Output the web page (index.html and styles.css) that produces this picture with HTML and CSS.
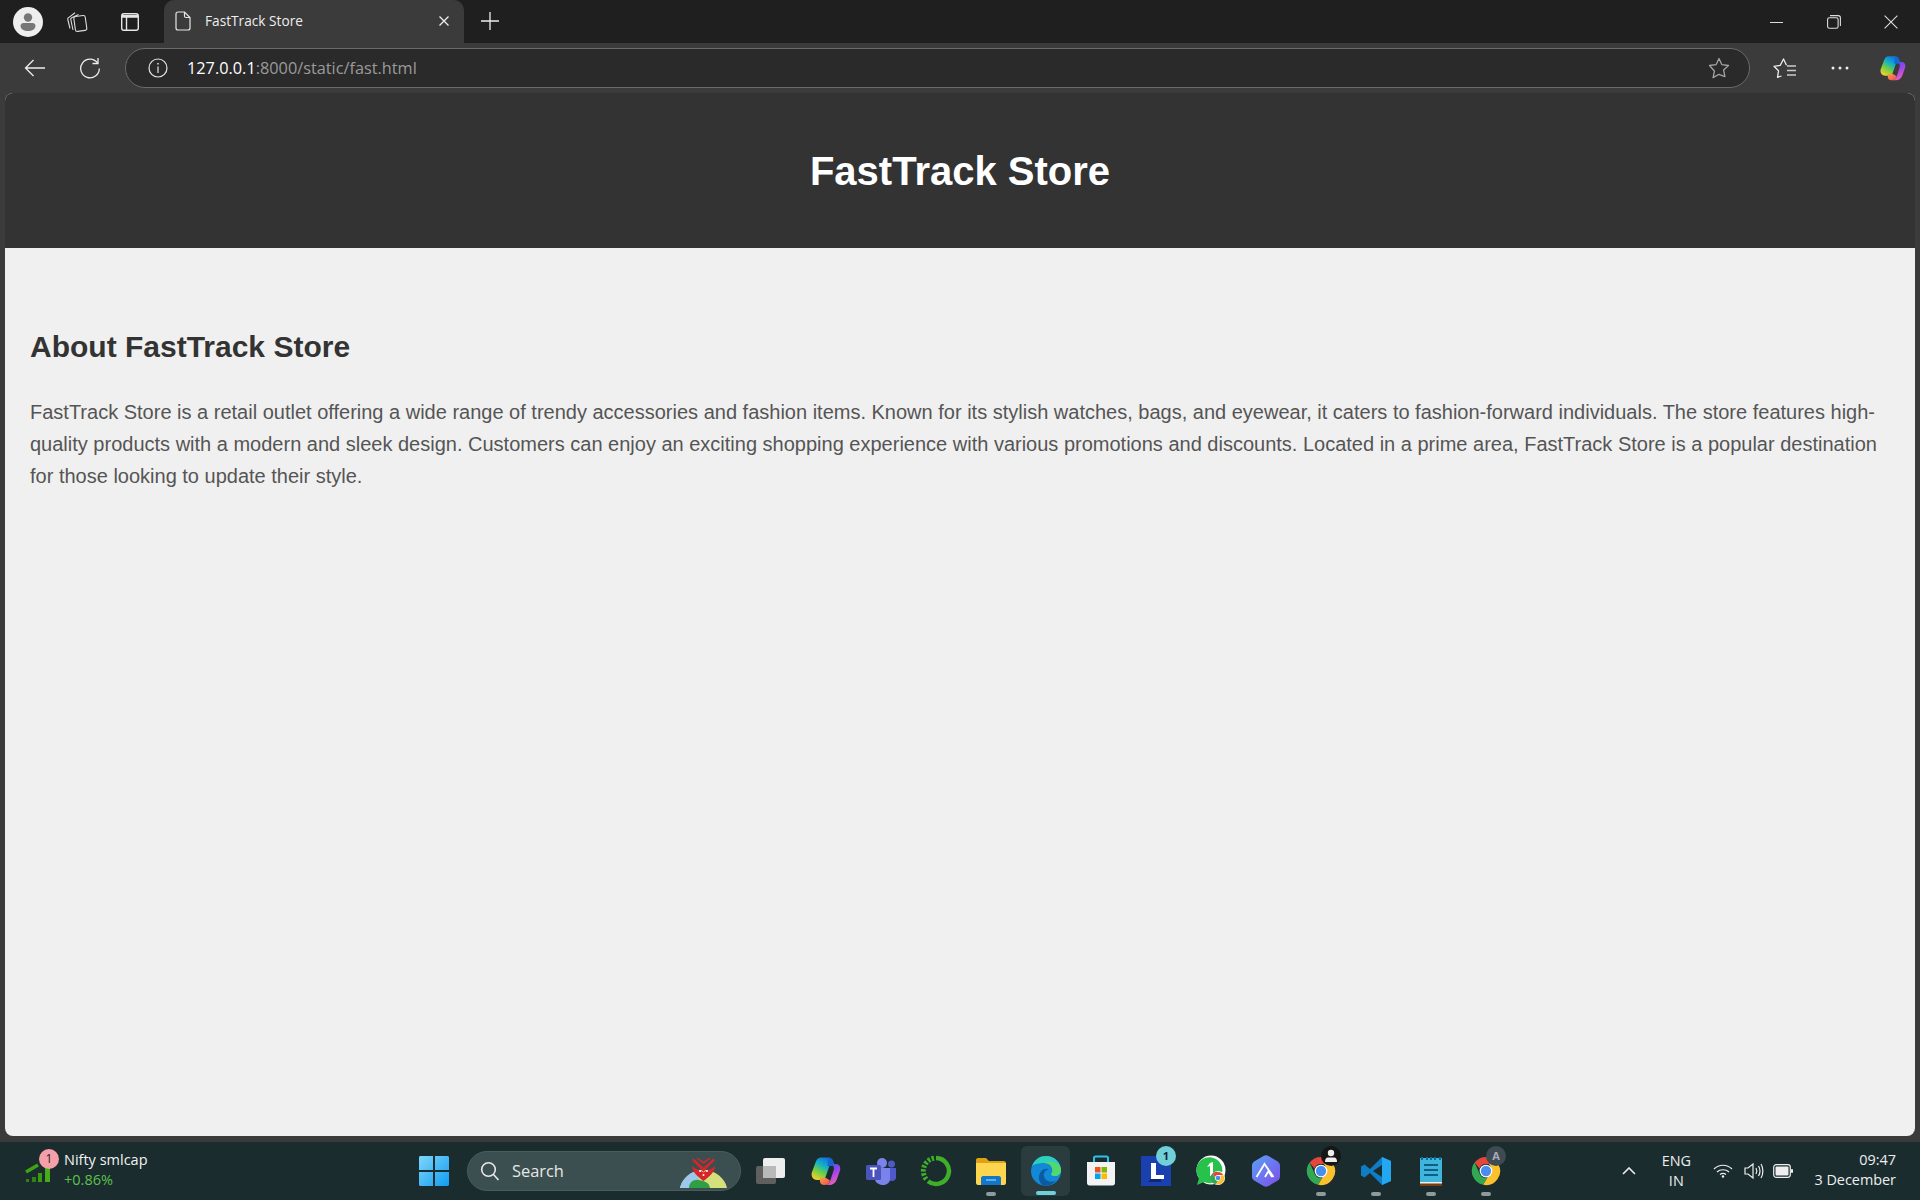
FILE: index.html
```html
<!DOCTYPE html>
<html lang="en">
<head>
<meta charset="utf-8">
<title>FastTrack Store</title>
<link rel="stylesheet" href="styles.css">
</head>
<body>
<svg class="defs" aria-hidden="true">
  <defs>
    <linearGradient id="cpL" x1="0.75" y1="0" x2="0.25" y2="1"><stop offset="0" stop-color="#1570e0"/><stop offset=".35" stop-color="#12b0c8"/><stop offset=".65" stop-color="#6fcf45"/><stop offset="1" stop-color="#f8d02a"/></linearGradient>
    <linearGradient id="cpR" x1="0.3" y1="0" x2="0.7" y2="1"><stop offset="0" stop-color="#4a55e8"/><stop offset=".45" stop-color="#a044ea"/><stop offset="1" stop-color="#f562b0"/></linearGradient>
    <linearGradient id="cpB" x1="0" y1="0" x2="1" y2="1"><stop offset="0" stop-color="#f9a13a"/><stop offset="1" stop-color="#ee4b5e"/></linearGradient>
    <symbol id="copilot" viewBox="0 0 32 30">
      <path d="M11 1.500C8 1.500 6.500 4 5.500 6.500L2 16c-1.500 4 1 8 5 8h7.500L21.500 4c-.5-1.500-1.500-2.500-3.500-2.500z" fill="url(#cpL)"/>
      <path d="M18 1.500c3 0 4.500 1.500 5.200 3.500L25 10h-7.500z" fill="#1667d2"/>
      <path d="M23 8h3c3.500 0 5 3 4 6.500L27 23c-1.500 4-4 6-8 6h-5c4 0 5.500-2 6.500-5L24 13z" fill="url(#cpR)"/>
      <path d="M10 22h6l4 2.500C19.500 27.500 17.500 29 14 29c-2 0-3.500-1-4-3z" fill="url(#cpB)"/>
    </symbol>
    <symbol id="chrome" viewBox="0 0 32 32">
      <path d="M16 1a15 15 0 0 1 13 7.500H16a7.500 7.500 0 0 0-7 4.700L3.800 7A15 15 0 0 1 16 1z" fill="#e5463b"/>
      <path d="M3.800 7L9.700 20a7.500 7.500 0 0 0 7.300 3.400L13 30.700A15 15 0 0 1 3.800 7z" fill="#33a852"/>
      <path d="M29 8.500A15 15 0 0 1 13 30.700l6.300-11a7.500 7.500 0 0 0-.3-11.200z" fill="#fbc02d"/>
      <circle cx="16" cy="16" r="6.800" fill="#fff"/><circle cx="16" cy="16" r="5.500" fill="#4a8df0"/>
    </symbol>
  </defs>
</svg>

<header class="tabbar">
  <div class="avatar">
    <svg viewBox="0 0 30 30" width="30" height="30"><circle cx="15" cy="15" r="15" fill="#eee"/><circle cx="15" cy="10.500" r="4.200" fill="#777"/><path d="M7.500 19c0-2 1.500-3 3-3h9c1.500 0 3 1 3 3 0 3-3.500 5-7.500 5s-7.500-2-7.500-5z" fill="#777"/></svg>
  </div>
  <button class="tool-btn collections">
    <svg viewBox="0 0 22 22" width="22" height="22" fill="none" stroke="#ddd" stroke-width="1.100"><rect x="8.500" y="5" width="11.500" height="15" rx="2" transform="rotate(-8 14 12)"/><path d="M7 19L4.800 8.500c-.2-.9.300-1.500.9-1.800L12.500 3.500"/><path d="M4 17.500L1.800 8.500c-.2-.9.200-1.600.9-1.900L9 1.800"/></svg>
  </button>
  <button class="tool-btn layout">
    <svg viewBox="0 0 20 20" width="20" height="20" fill="none" stroke="#e6e6e6" stroke-width="1.400"><rect x="1.700" y="1.700" width="16.600" height="16.600" rx="2.200"/><path d="M6.500 5v13.300M1.700 5h16.600" /><path d="M2 3h16v2H2z" fill="#e6e6e6" stroke="none"/></svg>
  </button>
  <div class="tab">
    <svg class="tab-doc" viewBox="0 0 16 20" width="16" height="20" fill="none" stroke="#e6e6e6" stroke-width="1.200"><path d="M1 3c0-1.100.9-2 2-2h6.500L15 6.500V17c0 1.100-.9 2-2 2H3c-1.100 0-2-.9-2-2z"/><path d="M9.500 1v4c0 1 .5 1.500 1.500 1.500h4"/></svg>
    <span class="tab-title">FastTrack Store</span>
    <svg class="tab-x" viewBox="0 0 12 12" width="12" height="12" stroke="#eee" stroke-width="1.300"><path d="M1.500 1.500l9 9M10.500 1.500l-9 9"/></svg>
  </div>
  <button class="tool-btn newtab">
    <svg viewBox="0 0 18 18" width="18" height="18" stroke="#eee" stroke-width="1.300"><path d="M9 0v18M0 9h18"/></svg>
  </button>
  <div class="win-controls">
    <svg viewBox="0 0 14 14" width="14" height="14" stroke="#ddd" stroke-width="1"><path d="M0 7.500h13"/></svg>
    <svg viewBox="0 0 14 14" width="14" height="14" fill="none" stroke="#ddd" stroke-width="1.100"><rect x=".6" y="2.800" width="10.500" height="10.500" rx="1.800"/><path d="M3 .6h8.200c1.200 0 2.200 1 2.200 2.200V11"/></svg>
    <svg viewBox="0 0 14 14" width="14" height="14" stroke="#ddd" stroke-width="1.100"><path d="M.6.6l12.800 12.800M13.400.6L.6 13.400"/></svg>
  </div>
</header>

<nav class="toolbar">
  <button class="tool-btn back">
    <svg viewBox="0 0 22 18" width="22" height="18" fill="none" stroke="#eee" stroke-width="1.300"><path d="M21 9H1.500M9.500 1l-8 8 8 8"/></svg>
  </button>
  <button class="tool-btn reload">
    <svg viewBox="0 0 22 22" width="22" height="22" fill="none" stroke="#eee" stroke-width="1.300"><path d="M18.500 6A9.300 9.300 0 1 0 20.300 11.500"/><path d="M19 1v5.500h-5.500"/></svg>
  </button>
  <div class="urlbar">
    <svg class="url-info" viewBox="0 0 20 20" width="20" height="20" fill="none" stroke="#e6e6e6" stroke-width="1.200"><circle cx="10" cy="10" r="9"/><path d="M10 8.500V15"/><path d="M10 5v1.600" stroke-width="1.500"/></svg>
    <span class="url-text"><span class="url-host">127.0.0.1</span>:8000/static/fast.html</span>
    <svg class="url-star" viewBox="0 0 22 22" width="22" height="22" fill="none" stroke="#a3a3a3" stroke-width="1.300"><path d="M11 1.500l2.900 6.200 6.600.8-4.900 4.500 1.300 6.600L11 17.300l-5.900 3.300 1.300-6.600L1.500 8.500l6.600-.8z" stroke-linejoin="round"/></svg>
  </div>
  <button class="tool-btn favs">
    <svg viewBox="0 0 24 22" width="24" height="22" fill="none" stroke="#eee" stroke-width="1.300"><path d="M8.500 19l-4 1.300 1-6.500L1 9.300l6.300-1L10.500 2l3 6.200" stroke-linejoin="round"/><path d="M14 9h9M14 13.500h9M14 18h9" stroke="#ccc"/></svg>
  </button>
  <button class="tool-btn dots">
    <svg viewBox="0 0 18 4" width="18" height="4" fill="#eee"><circle cx="2" cy="2" r="1.500"/><circle cx="9" cy="2" r="1.500"/><circle cx="16" cy="2" r="1.500"/></svg>
  </button>
  <svg class="copilot-top" width="28" height="26"><use href="#copilot"/></svg>
</nav>

<main class="viewport">
  <section class="site-header"><h1>FastTrack Store</h1></section>
  <section class="content">
    <h2>About FastTrack Store</h2>
    <p>FastTrack Store is a retail outlet offering a wide range of trendy accessories and fashion items. Known for its stylish watches, bags, and eyewear, it caters to fashion-forward individuals. The store features high-quality products with a modern and sleek design. Customers can enjoy an exciting shopping experience with various promotions and discounts. Located in a prime area, FastTrack Store is a popular destination for those looking to update their style.</p>
  </section>
</main>

<footer class="taskbar">
  <div class="widget">
    <div class="widget-icon">
      <span class="widget-badge">1</span>
      <svg viewBox="0 0 30 24" width="30" height="24"><path d="M1 13l12-7" stroke="#3fa414" stroke-width="3.500"/><rect x="1" y="20" width="3" height="3" fill="#2f8410"/><rect x="7" y="18" width="4" height="5" fill="#2f8410"/><rect x="13" y="14" width="4" height="9" fill="#3a9a12"/><rect x="20" y="8" width="5" height="15" fill="#45ae16"/></svg>
    </div>
    <div class="widget-text"><span class="widget-name">Nifty smlcap</span><span class="widget-change">+0.86%</span></div>
  </div>

  <div class="center">
    <svg class="start" viewBox="0 0 30 30" width="30" height="30"><defs><linearGradient id="win" x1="0" y1="0" x2="1" y2="1"><stop offset="0" stop-color="#7fd6fb"/><stop offset="1" stop-color="#0f9cf0"/></linearGradient></defs><path d="M0 1.500C0 .7.700 0 1.500 0H14v14H0zM16 0h12.500c.8 0 1.500.7 1.500 1.500V14H16zM0 16h14v14H1.500C.7 30 0 29.300 0 28.500zM16 16h14v12.500c0 .8-.7 1.500-1.500 1.500H16z" fill="url(#win)"/></svg>
    <div class="search">
      <svg viewBox="0 0 20 20" width="20" height="20" fill="none" stroke="#e8e8e8" stroke-width="1.600"><circle cx="8.500" cy="8.500" r="6.800"/><path d="M13.500 13.500l5 5.500"/></svg>
      <span class="search-label">Search</span>
      <svg class="search-art" viewBox="0 0 47 30" width="47" height="30"><path d="M0 30C2 20 12 12 23.500 12S45 20 47 30z" fill="#d3e07c"/><path d="M0 30C2 21 9 15 16 13l6 17z" fill="#9cc8ee"/><path d="M9 30c0-6 5-9 10-8 5 1 10 2 11 8z" fill="#2f9e44"/><path d="M12 2l11.500 12L35 2l-1.500-1.500-10 9-10-9zM16 0l7.500 6L31 0h-2l-5.500 3.500L18 0z" fill="#d6262c"/><path d="M12 8c3 3 8 4 11.500 6.500C27 12 32 11 35 8c0 6-6 11-11.500 15C18 19 12 14 12 8z" fill="#d6262c"/><circle cx="20" cy="13" r="1" fill="#fff"/><circle cx="27" cy="13" r="1" fill="#fff"/><circle cx="23.500" cy="17" r="1" fill="#fff"/></svg>
    </div>
    <div class="apps">
      <div class="app">
        <svg viewBox="0 0 32 28" width="32" height="28"><rect x="1" y="9" width="20" height="18" rx="2" fill="#5f5f5f"/><rect x="8" y="1" width="22" height="20" rx="2" fill="#eeeeee"/><rect x="8" y="9" width="13" height="12" fill="#b9b9b9"/></svg>
      </div>
      <div class="app"><svg width="32" height="30"><use href="#copilot"/></svg></div>
      <div class="app">
        <svg viewBox="0 0 32 28" width="32" height="28"><circle cx="17" cy="6" r="5" fill="#7b83eb"/><circle cx="26.500" cy="7" r="3.500" fill="#5059c9"/><path d="M22 11h9v9c0 3-2 4-4.500 4S22 22 22 20z" fill="#5059c9"/><path d="M10 11h15v11c0 3.500-3 6-7 6s-8-2.500-8-6z" fill="#7b83eb"/><rect x="1" y="8" width="15" height="15" rx="1.500" fill="#4b53bc"/><path d="M5 11.500h7M8.500 11.500v8.500" stroke="#fff" stroke-width="1.800"/></svg>
      </div>
      <div class="app">
        <svg viewBox="0 0 32 32" width="32" height="32" fill="none"><path d="M16 3a13 13 0 1 1-8 23.300" stroke="#3fae29" stroke-width="4.500"/><path d="M14 3.200A13 13 0 0 0 7 25" stroke="#3fae29" stroke-width="5" stroke-dasharray="2.500 1.500"/></svg>
      </div>
      <div class="app has-dot">
        <svg viewBox="0 0 30 28" width="30" height="28"><path d="M0 3c0-1 .7-2 2-2h8l3 3h15c1 0 2 1 2 2v4H0z" fill="#dfa215"/><path d="M0 6h30v20c0 1-1 2-2 2H2c-1 0-2-1-2-2z" fill="#fdd54f"/><path d="M5 21c0-1 1-2 2-2h16c1 0 2 1 2 2v7H5z" fill="#1277c8"/><path d="M10 23h10" stroke="#9cd3f5" stroke-width="1.200"/></svg>
      </div>
      <div class="app active">
        <svg viewBox="0 0 32 32" width="32" height="32"><defs><linearGradient id="edgeA" x1="0" y1="0" x2="1" y2="1"><stop offset="0" stop-color="#29d6a8"/><stop offset="1" stop-color="#35c1f1"/></linearGradient></defs><circle cx="16" cy="16" r="15" fill="#1189d6"/><path d="M2 11C5 4 10 1 16 1c9 0 15 7 15 14 0 4-3 6-6 6-2 0-4-1-4-2 1-1 1.500-2 1.500-3.500C22.500 11 19 8 15 8 9 8 4 9 2 11z" fill="url(#edgeA)"/><path d="M31 15c0 4-3 6-6 6-2 0-3.500-.5-4-2 1-1 1.500-2 1.500-3.500C22.500 11 19 8 14 8c3-2 8-2 12 0 3 2 5 4 5 7z" fill="#53d86a"/><path d="M13 30.500C8 27 8 20 11 16.500 13 14 17 13 19 14.500c-3 0-6 3-5 7 1 4 6 7 12 4-3 4-8 6-13 5z" fill="#0c5aa0"/></svg>
      </div>
      <div class="app">
        <svg viewBox="0 0 30 32" width="30" height="32"><path d="M8 7V3c0-1 .5-1.500 1.500-1.500h11C21.500 1.500 22 2 22 3v4" fill="none" stroke="#2cc0ea" stroke-width="2"/><path d="M1 7h28v21c0 1.500-1 2.500-2.500 2.500h-23C2 30.500 1 29.500 1 28z" fill="#f3f3f3"/><rect x="9" y="12" width="5.500" height="5.500" fill="#f25022"/><rect x="15.500" y="12" width="5.500" height="5.500" fill="#7fba00"/><rect x="9" y="18.500" width="5.500" height="5.500" fill="#00a4ef"/><rect x="15.500" y="18.500" width="5.500" height="5.500" fill="#ffb900"/></svg>
      </div>
      <div class="app">
        <svg viewBox="0 0 30 30" width="30" height="30"><rect width="30" height="30" fill="#1a3fae"/><path d="M10 7h5v12h8v4H10z" fill="#fff"/><path d="M10 23l-3 3h13v-3z" fill="#10286e"/></svg>
        <span class="badge badge-teal">1</span>
      </div>
      <div class="app">
        <svg viewBox="0 0 32 32" width="32" height="32"><circle cx="16" cy="15" r="14.500" fill="#fff"/><path d="M2 30l2-7A13 13 0 1 1 9 27z" fill="#27c24c"/><path d="M15 8l3-1v14h-3V11l-3 1z" fill="#fff"/><circle cx="23" cy="23" r="7" fill="#fff"/><path d="M23 17a6 6 0 0 1 5.200 3H23a3 3 0 0 0-3 2l-2.500-3.500A6 6 0 0 1 23 17z" fill="#e5463b"/><path d="M17.500 18.500L20 22a3 3 0 0 0 3 4l-2 3a6 6 0 0 1-3.500-10.500z" fill="#33a852"/><path d="M28.200 20A6 6 0 0 1 21 29l2-3a3 3 0 0 0 2-5z" fill="#fbc02d"/><circle cx="23" cy="23" r="2.300" fill="#4a8df0"/></svg>
      </div>
      <div class="app">
        <svg viewBox="0 0 28 32" width="28" height="32"><defs><linearGradient id="arc" x1="0" y1="0" x2="1" y2="1"><stop offset="0" stop-color="#5aa2f5"/><stop offset="1" stop-color="#7d4de8"/></linearGradient></defs><path d="M11.500 1a5 5 0 0 1 5 0l8.500 5c1.700 1 3 2.500 3 4.500v11c0 2-1.300 3.500-3 4.500l-8.500 5a5 5 0 0 1-5 0L3 26c-1.700-1-3-2.500-3-4.500v-11C0 8.500 1.300 7 3 6z" fill="url(#arc)"/><path d="M4.500 22l8-13 9 13M13 22l3.500-6 3.500 6" fill="none" stroke="#fff" stroke-width="1.800"/></svg>
      </div>
      <div class="app has-dot">
        <svg width="30" height="30"><use href="#chrome"/></svg>
        <span class="badge badge-dark"><svg viewBox="0 0 14 14" width="14" height="14" fill="#eee"><circle cx="7" cy="4" r="3.200"/><path d="M1 13c0-3 1-4.500 3-4.500h6c2 0 3 1.500 3 4.500z"/></svg></span>
      </div>
      <div class="app has-dot">
        <svg viewBox="0 0 30 30" width="30" height="30"><path d="M21 1L9 13 3.500 8.500 0 10.500v9L3.500 21.500 9 17l12 12 9-4V5z" fill="#0f7cc4"/><path d="M21 1l9 4v20l-9 4z" fill="#22a7f0"/><path d="M21 9L12 15l9 6z" fill="#1a2c2e"/></svg>
      </div>
      <div class="app has-dot">
        <svg viewBox="0 0 22 30" width="22" height="30"><rect y="2" width="22" height="28" fill="#3fb4dc"/><rect y="27" width="22" height="3" fill="#7a3d14"/><rect y="26" width="22" height="1.500" fill="#eee"/><path d="M4 9h14M4 14h14M4 19h14" stroke="#0d5f85" stroke-width="2"/><path d="M2 1v3M7 1v3M11 1v3M15 1v3M20 1v3" stroke="#0d6f95" stroke-width="2"/></svg>
      </div>
      <div class="app has-dot">
        <svg width="30" height="30"><use href="#chrome"/></svg>
        <span class="badge badge-slate">A</span>
      </div>
    </div>
  </div>

  <div class="tray">
    <svg class="tray-chevron" viewBox="0 0 14 8" width="14" height="8" fill="none" stroke="#eee" stroke-width="1.600"><path d="M1 7l6-6 6 6"/></svg>
    <div class="lang"><span>ENG</span><span>IN</span></div>
    <svg class="tray-wifi" viewBox="0 0 20 14" width="20" height="14" fill="none" stroke="#eee" stroke-width="1.200"><path d="M1 5c5-5 13-5 18 0M4 8c3-3 9-3 12 0M7 10.500c2-1.500 4-1.500 6 0"/><circle cx="10" cy="12.500" r="1.200" fill="#eee" stroke="none"/></svg>
    <svg class="tray-vol" viewBox="0 0 20 18" width="20" height="18" fill="none" stroke="#eee" stroke-width="1.200"><path d="M1 6h3l5-4v14l-5-4H1z"/><path d="M12 6c1 1.800 1 4.200 0 6M14.500 4c1.800 3 1.800 7 0 10M17 2c2.500 4 2.500 10 0 14"/></svg>
    <svg class="tray-batt" viewBox="0 0 20 14" width="20" height="14"><rect x=".7" y=".7" width="16.600" height="12.600" rx="2.500" fill="none" stroke="#eee" stroke-width="1.200"/><rect x="2.500" y="2.500" width="13" height="9" rx="1" fill="#eee"/><rect x="18" y="5" width="2" height="4" rx="1" fill="#eee"/></svg>
    <div class="clock"><span>09:47</span><span>3 December</span></div>
  </div>
</footer>
</body>
</html>
```
FILE: styles.css
```css
* { box-sizing: border-box; }
html, body { margin: 0; height: 100%; }
body {
  display: flex;
  flex-direction: column;
  height: 1200px;
  overflow: hidden;
  background: #3b3b3b;
  font-family: "Open Sans", "Noto Sans", sans-serif;
  color: #eee;
}
.defs { width: 0; height: 0; display: block; flex: none; }
button { background: none; border: 0; padding: 0; display: flex; align-items: center; justify-content: center; flex: none; }

.tabbar {
  flex: none;
  height: 43px;
  display: flex;
  align-items: center;
  background: #1f1f1f;
  padding-left: 13px;
}
.avatar { width: 30px; height: 30px; flex: none; }
.avatar svg { display: block; }
.collections { margin-left: 23px; width: 22px; }
.layout { margin-left: 32px; width: 20px; }
.tab {
  margin-left: 24px;
  width: 300px;
  height: 43px;
  align-self: flex-end;
  display: flex;
  align-items: center;
  background: #3b3b3b;
  border-radius: 10px 10px 0 0;
  padding: 0 14px 2px 11px;
  flex: none;
}
.tab-doc { flex: none; }
.tab-title { margin-left: 14px; font-size: 13.700px; color: #eee; flex: 1; white-space: nowrap; }
.tab-x { flex: none; }
.newtab { margin-left: 17px; width: 18px; padding-bottom: 2px; }
.win-controls { margin-left: auto; display: flex; align-items: center; gap: 43px; padding-right: 22px; }

.toolbar {
  flex: none;
  height: 50px;
  display: flex;
  align-items: center;
  background: #3b3b3b;
  padding-left: 24px;
}
.back { width: 22px; }
.reload { margin-left: 33px; width: 22px; }
.urlbar {
  margin-left: 24px;
  width: 1625px;
  height: 40px;
  flex: none;
  display: flex;
  align-items: center;
  background: #2a2a2a;
  border: 1px solid #6a6a6a;
  border-radius: 20px;
  padding: 0 19px 0 22px;
}
.url-info { flex: none; }
.url-text { margin-left: 19px; font-size: 16.300px; color: #9a9a9a; flex: 1; padding-bottom: 1px; }
.url-host { color: #fff; }
.url-star { flex: none; }
.favs { margin-left: 23px; width: 24px; }
.dots { margin-left: 34px; width: 18px; }
.copilot-top { margin-left: 30px; flex: none; }

.viewport {
  flex: none;
  height: 1043px;
  margin: 0 5px;
  background: #f0f0f0;
  border-radius: 8px;
  overflow: hidden;
  font-family: "Liberation Sans", Arial, sans-serif;
}
.site-header {
  height: 155px;
  background: #333;
  display: flex;
  align-items: center;
  justify-content: center;
  padding-top: 2px;
}
.site-header h1 { margin: 0; font-size: 40px; font-weight: 700; color: #fff; }
.content { padding: 80px 25px 0; }
.content h2 { margin: 0; font-size: 30px; font-weight: 700; color: #333; line-height: 37px; }
.content p { margin: 31px 0 0; font-size: 20px; line-height: 32px; color: #555; }

.taskbar {
  flex: none;
  height: 64px;
  display: flex;
  align-items: center;
  background: #1a2c2e;
  border-top: 5px solid transparent;
  box-shadow: inset 0 1px 0 #3a3a3a;
  background-clip: padding-box;
  padding-top: 0;
}
.widget { display: flex; align-items: center; width: 399px; padding-left: 25px; flex: none; }
.widget-icon { position: relative; width: 30px; height: 24px; }
.widget-icon svg { display: block; }
.widget-badge {
  position: absolute; left: 14px; top: -10px;
  width: 20px; height: 20px; border-radius: 50%;
  background: #f5a0a8; color: #222; font-size: 12px; line-height: 20px; text-align: center;
}
.widget-text { display: flex; flex-direction: column; margin-left: 9px; padding-bottom: 2px; }
.widget-name { font-size: 14.500px; line-height: 20px; color: #f2f2f2; }
.widget-change { font-size: 14.500px; line-height: 20px; color: #5cc24a; }

.center { display: flex; align-items: center; flex: none; }
.start { margin-left: 20px; flex: none; }
.search {
  margin-left: 18px;
  width: 274px;
  height: 40px;
  display: flex;
  align-items: center;
  background: #3b4f50;
  border: 1px solid #4a5c5d;
  border-radius: 20px;
  padding-left: 12px;
  overflow: hidden;
}
.search-label { margin-left: 12px; font-size: 16.400px; color: #e6e6e6; flex: 1; }
.search-art { flex: none; margin: 0 13px 2px 0; align-self: flex-end; }
.apps { display: flex; margin-left: 2px; }
.app { position: relative; width: 55px; height: 50px; display: flex; align-items: center; justify-content: center; flex: none; }
.app.has-dot::after {
  content: ""; position: absolute; left: 50%; bottom: 0;
  width: 10px; height: 4px; margin-left: -5px; border-radius: 2px; background: #8f9a9b;
}
.app.active { background: none; }
.app.active::before {
  content: ""; position: absolute; left: 3px; right: 3px; top: 0; bottom: 0;
  border-radius: 6px; background: #2a3c3e;
}
.app.active svg { position: relative; }
.app.active::after {
  content: ""; position: absolute; left: 50%; bottom: 1px;
  width: 20px; height: 4px; margin-left: -10px; border-radius: 2px; background: #6fd0dc;
}
.badge {
  position: absolute; right: 7px; top: 0;
  width: 20px; height: 20px; border-radius: 50%;
  display: flex; align-items: center; justify-content: center;
  font-size: 11px; font-weight: 700;
}
.badge-teal { background: #70d0d8; color: #123; }
.badge-dark { background: #161616; }
.badge-slate { background: #3f4b52; color: #aab; }

.tray { margin-left: auto; display: flex; align-items: center; padding-right: 24px; }
.tray-chevron { flex: none; }
.lang { margin-left: 26px; display: flex; flex-direction: column; align-items: center; font-size: 14.400px; line-height: 20px; color: #eee; }
.tray-wifi { margin-left: 22px; }
.tray-vol { margin-left: 11.500px; }
.tray-batt { margin-left: 8.500px; }
.clock { margin-left: 21.500px; display: flex; flex-direction: column; align-items: flex-end; font-size: 14.400px; line-height: 20px; color: #eee; padding-bottom: 2px; }
```
